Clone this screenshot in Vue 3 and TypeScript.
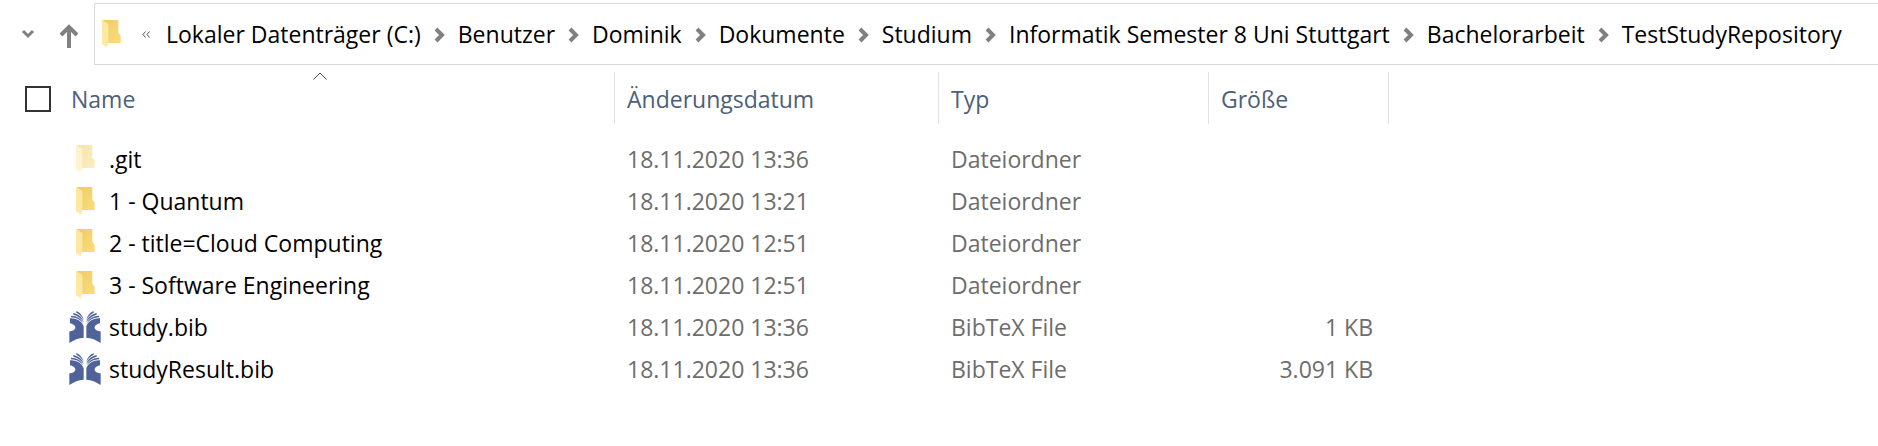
<script setup lang="ts">
interface Entry {
  name: string
  modified: string
  type: string
  size: string
  icon: 'folder' | 'bib'
  hidden?: boolean
}

const path: string[] = [
  'Lokaler Datenträger (C:)',
  'Benutzer',
  'Dominik',
  'Dokumente',
  'Studium',
  'Informatik Semester 8 Uni Stuttgart',
  'Bachelorarbeit',
  'TestStudyRepository',
]

const entries: Entry[] = [
  { name: '.git', modified: '18.11.2020 13:36', type: 'Dateiordner', size: '', icon: 'folder', hidden: true },
  { name: '1 - Quantum', modified: '18.11.2020 13:21', type: 'Dateiordner', size: '', icon: 'folder' },
  { name: '2 - title=Cloud Computing', modified: '18.11.2020 12:51', type: 'Dateiordner', size: '', icon: 'folder' },
  { name: '3 - Software Engineering', modified: '18.11.2020 12:51', type: 'Dateiordner', size: '', icon: 'folder' },
  { name: 'study.bib', modified: '18.11.2020 13:36', type: 'BibTeX File', size: '1 KB', icon: 'bib' },
  { name: 'studyResult.bib', modified: '18.11.2020 13:36', type: 'BibTeX File', size: '3.091 KB', icon: 'bib' },
]
</script>

<template>
  <main class="explorer">
    <svg class="defs" aria-hidden="true">
      <defs>
        <linearGradient id="folder-back" x1="0" y1="0" x2="1" y2="1">
          <stop offset="0" stop-color="#eecb66" />
          <stop offset="1" stop-color="#fbdc7c" />
        </linearGradient>
        <linearGradient id="folder-flap" x1="0" y1="0" x2="0" y2="1">
          <stop offset="0" stop-color="#fde7a0" />
          <stop offset="1" stop-color="#ffe9a6" />
        </linearGradient>
        <symbol id="folder" viewBox="0 0 57 84">
          <path d="M3 0H49V38L56 47V69H8Z" fill="url(#folder-back)" />
          <path d="M0 0L19 12V72L15 74V83L0 72Z" fill="url(#folder-flap)" />
        </symbol>
        <symbol id="bib" viewBox="0 0 94 96">
          <g id="bib-half" fill="#50629a">
            <path d="M2 22C20 21 37 29 43 46V80C28 80 14 87 0 96V61C9 60 18 56 18 50C18 43 9 38 2 37Z" />
            <path d="M5 14C22 14 37 22 42 38C34 26 20 20 5 19Z" />
            <path d="M12 6C27 9 39 19 43 33C35 21 24 14 12 11Z" />
            <path d="M21 0C33 5 41 16 43 27C37 16 30 9 21 5Z" />
          </g>
          <use href="#bib-half" transform="translate(94 0) scale(-1 1)" />
        </symbol>
      </defs>
    </svg>

    <nav class="toolbar" aria-label="Adressleiste">
      <button class="nav-button recent" type="button" aria-label="Zuletzt besuchte Orte">
        <svg width="14" height="10" viewBox="0 0 14 10">
          <path d="M2 2L7 7L12 2" fill="none" stroke="#808080" stroke-width="3" />
        </svg>
      </button>
      <button class="nav-button up" type="button" aria-label="Nach oben">
        <svg width="20" height="24" viewBox="0 0 20 24">
          <path d="M10 24V3M2 11L10 3L18 11" fill="none" stroke="#808080" stroke-width="4" />
        </svg>
      </button>
      <div class="address">
        <svg class="folder-icon" width="19" height="28"><use href="#folder" /></svg>
        <button class="overflow" type="button" aria-label="Weitere Ordner">
          <svg width="8" height="7" viewBox="0 0 8 7">
            <path d="M3.5 .5L1 3.5L3.5 6.5M7.5 .5L5 3.5L7.5 6.5" fill="none" stroke="#555" />
          </svg>
        </button>
        <ol class="crumbs">
          <li v-for="(part, i) in path" :key="part">
            <svg v-if="i > 0" class="separator" width="11" height="16" viewBox="0 0 11 16">
              <path d="M2 2L8 8L2 14" fill="none" stroke="#808080" stroke-width="4" />
            </svg>
            <a href="#">{{ part }}</a>
          </li>
        </ol>
      </div>
    </nav>

    <table class="files">
      <colgroup>
        <col class="col-name" />
        <col class="col-date" />
        <col class="col-type" />
        <col class="col-size" />
      </colgroup>
      <thead>
        <tr>
          <th scope="col" aria-sort="ascending">
            <svg class="sort" width="14" height="8" viewBox="0 0 14 8">
              <path d="M.5 7.5L7 1L13.5 7.5" fill="none" stroke="#444" />
            </svg>
            <div class="name-head">
              <input type="checkbox" aria-label="Alle auswählen" />
              <span>Name</span>
            </div>
          </th>
          <th scope="col">Änderungsdatum</th>
          <th scope="col">Typ</th>
          <th scope="col">Größe</th>
        </tr>
      </thead>
      <tbody>
        <tr v-for="entry in entries" :key="entry.name">
          <td>
            <div class="name-cell">
              <span class="icon-slot">
                <svg v-if="entry.icon === 'folder'" :class="{ faded: entry.hidden }" width="19" height="28">
                  <use href="#folder" />
                </svg>
                <svg v-else width="32" height="32"><use href="#bib" /></svg>
              </span>
              <span>{{ entry.name }}</span>
            </div>
          </td>
          <td>{{ entry.modified }}</td>
          <td>{{ entry.type }}</td>
          <td class="size">{{ entry.size }}</td>
        </tr>
      </tbody>
    </table>
  </main>
</template>

<style>
body {
  margin: 0;
  background: #fff;
}
</style>

<style scoped>
.explorer {
  font-family: 'Segoe UI', 'Open Sans', 'Noto Sans', sans-serif;
  font-size: 23px;
  line-height: 32px;
  color: #000;
  overflow: hidden;
}

.defs {
  position: absolute;
  width: 0;
  height: 0;
}

svg {
  display: block;
  flex: none;
}

.toolbar {
  display: flex;
  align-items: stretch;
  padding-top: 3px;
}

.nav-button,
.overflow {
  display: flex;
  align-items: center;
  padding: 0;
  border: 0;
  background: none;
}

.recent {
  margin-left: 21px;
}

.up {
  margin: 4px 15px 0 24px;
}

.address {
  display: flex;
  flex: 1;
  align-items: center;
  min-width: 0;
  height: 60px;
  padding-left: 7px;
  border: 1px solid #d9d9d9;
  border-right: 0;
}

.overflow {
  margin-left: 21px;
}

.crumbs {
  display: flex;
  margin: 0 0 0 16px;
  padding: 0;
  list-style: none;
  white-space: nowrap;
}

.crumbs li {
  display: flex;
  align-items: center;
}

.separator {
  margin: 2px 13px 0;
}

a {
  color: inherit;
  text-decoration: none;
}

.files {
  width: 1364px;
  margin: 7px 0 0 25px;
  border-collapse: separate;
  border-spacing: 0;
  table-layout: fixed;
}

.col-name {
  width: 590px;
}

.col-date {
  width: 324px;
}

.col-type {
  width: 270px;
}

.col-size {
  width: 180px;
}

th {
  position: relative;
  height: 52px;
  padding: 2px 0 0 12px;
  border-right: 1px solid #e2e2e2;
  box-sizing: border-box;
  color: #4c607a;
  font-weight: 400;
  text-align: left;
}

th:first-child,
td:first-child {
  padding-left: 0;
}

.sort {
  position: absolute;
  top: 0;
  left: calc(50% - 7px);
}

.name-head {
  display: flex;
  align-items: center;
  gap: 20px;
}

input {
  appearance: none;
  width: 26px;
  height: 26px;
  margin: 0;
  border: 2px solid #333;
  background: #fff;
}

tbody::before {
  content: '';
  display: table-row;
  height: 14px;
}

td {
  height: 42px;
  padding: 0 0 0 12px;
  box-sizing: border-box;
  color: #6d6d6d;
}

.name-cell {
  display: flex;
  align-items: center;
  gap: 7px;
  padding-left: 45px;
  color: #000;
}

.icon-slot {
  display: flex;
  justify-content: center;
  width: 32px;
}

.icon-slot svg {
  margin-right: 2px;
}

.faded {
  opacity: 0.5;
}

td.size {
  padding-right: 16px;
  text-align: right;
}
</style>
